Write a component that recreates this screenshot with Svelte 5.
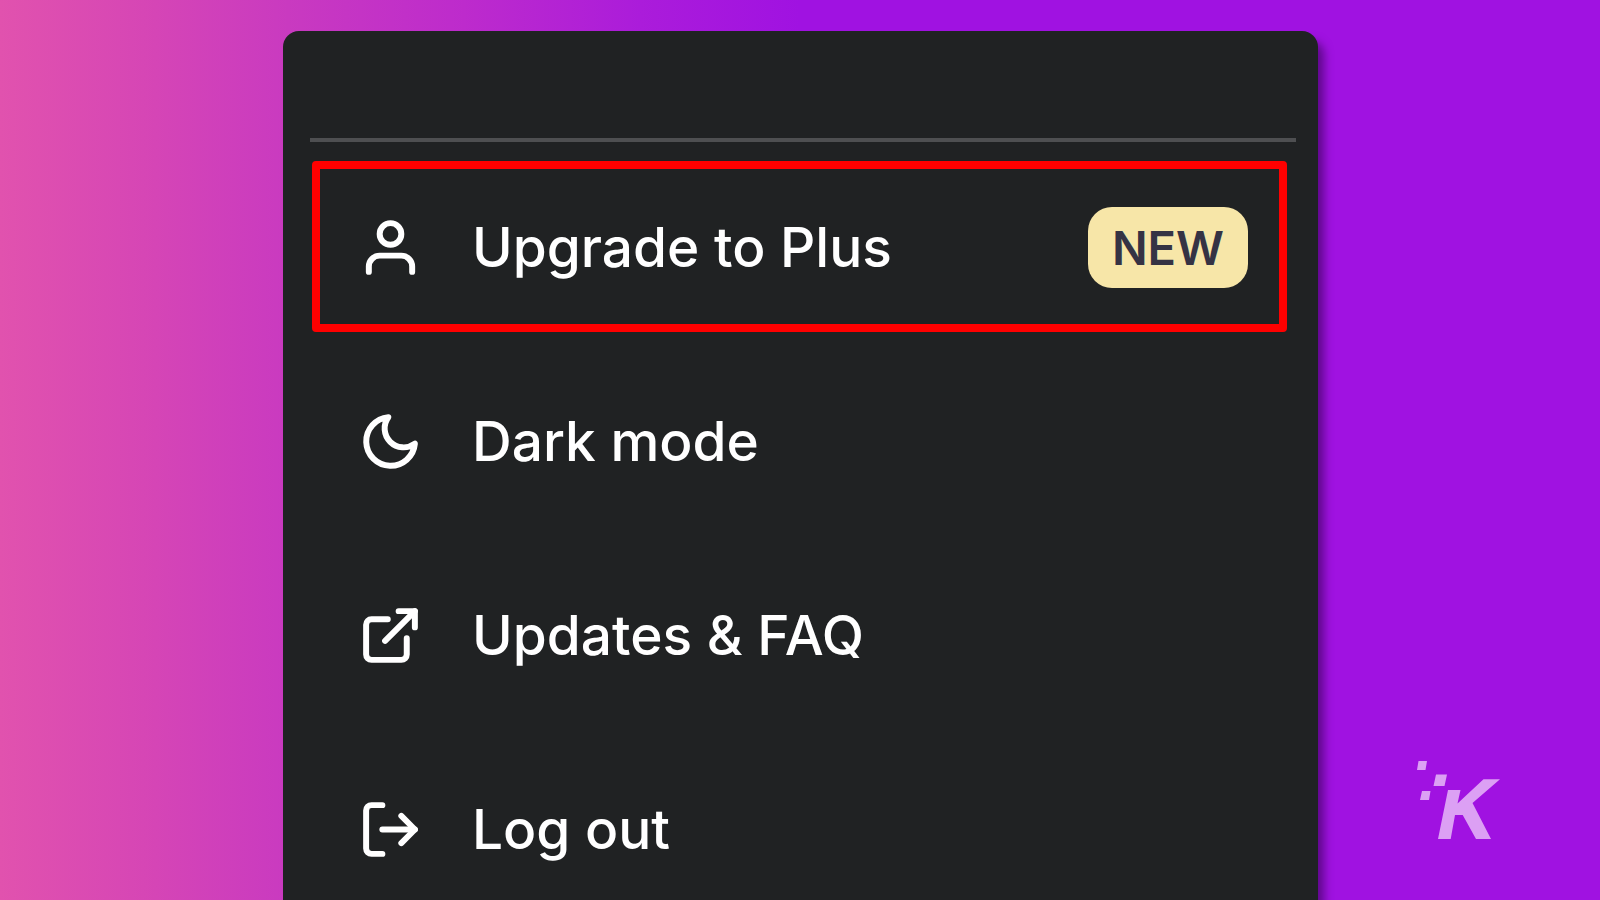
<script>
  const items = [
    { label: 'Upgrade to Plus', icon: 'user', badge: 'NEW', highlighted: true },
    { label: 'Dark mode', icon: 'moon' },
    { label: 'Updates & FAQ', icon: 'external' },
    { label: 'Log out', icon: 'logout' }
  ];
</script>

<main class="page">
  <nav class="panel" aria-label="Account">
    <hr class="divider" />
    <ul class="menu">
      {#each items as item}
        <li class="row">
          <button type="button" class="item" class:highlighted={item.highlighted}>
            <svg class="icon" viewBox="0 0 24 24" aria-hidden="true">
              {#if item.icon === 'user'}
                <path d="M20 21v-2a4 4 0 0 0-4-4H8a4 4 0 0 0-4 4v2" />
                <circle cx="12" cy="7" r="4" />
              {:else if item.icon === 'moon'}
                <path d="M21 12.79A9 9 0 1 1 11.21 3 7 7 0 0 0 21 12.79z" />
              {:else if item.icon === 'external'}
                <path d="M18 13v6a2 2 0 0 1-2 2H5a2 2 0 0 1-2-2V8a2 2 0 0 1 2-2h6" />
                <path d="M15 3h6v6" />
                <path d="M10 14L21 3" />
              {:else}
                <path d="M9 21H5a2 2 0 0 1-2-2V5a2 2 0 0 1 2-2h4" />
                <path d="M16 17l5-5-5-5" />
                <path d="M21 12H9" />
              {/if}
            </svg>
            <span class="label">{item.label}</span>
            {#if item.badge}
              <span class="badge">{item.badge}</span>
            {/if}
          </button>
        </li>
      {/each}
    </ul>
  </nav>

  <svg class="logo" viewBox="0 0 84 80" aria-hidden="true">
    <path d="M2.5 1H11L9.5 10H1zM20 14.5h11L28.5 26h-11zM6 31h8.500L13 40H4z" />
    <path d="M32 30h12.500L41.500 43.500 67.500 19.300H84L56.500 43 75 79H60L46.700 55H39L34.700 79H22z" />
  </svg>
</main>

<style>
  :global(body) {
    margin: 0;
  }

  .page {
    position: relative;
    box-sizing: border-box;
    height: 100vh;
    padding: 31px 282px 0 283px;
    overflow: hidden;
    background: linear-gradient(90deg, #e152ae 0%, #d646b5 9%, #c93ac0 18%, #bd2bcc 29%, #ab1cda 40%, #a012e1 50%);
    font-family: Inter, "Liberation Sans", sans-serif;
  }

  .panel {
    box-sizing: border-box;
    min-height: 100%;
    padding: 107px 22px 0 27px;
    border-radius: 16px 16px 0 0;
    background: #202223;
    box-shadow: 8px 8px 10px -2px rgba(50, 0, 80, 0.6);
  }

  .divider {
    height: 4px;
    margin: 0;
    border: 0;
    background: #4e4f51;
  }

  .menu {
    margin: 0;
    padding: 7px 9px 0 2px;
    list-style: none;
  }

  .row {
    display: flex;
    align-items: center;
    height: 194px;
  }

  .item {
    box-sizing: border-box;
    display: flex;
    flex: 1;
    align-items: center;
    height: 171px;
    padding: 2px 31px 0 38px;
    border: 8px solid transparent;
    border-radius: 4px;
    background: none;
    color: #fff;
    font: inherit;
    font-size: 55px;
    font-weight: 500;
    line-height: 64px;
    text-align: left;
    cursor: pointer;
  }

  .highlighted {
    border-color: #f00;
  }

  .icon {
    flex: none;
    width: 65px;
    height: 65px;
    margin-right: 49px;
    fill: none;
    stroke: currentColor;
    stroke-width: 2.2;
    stroke-linecap: round;
    stroke-linejoin: round;
  }

  .label {
    flex: 1;
  }

  .badge {
    padding: 9px 24px 8px;
    border-radius: 24px;
    background: #f7e6a8;
    color: #353344;
    font-size: 47px;
    font-weight: 600;
  }

  .logo {
    position: absolute;
    right: 100px;
    bottom: 60px;
    width: 84px;
    height: 80px;
    fill: #dca0f4;
  }
</style>
